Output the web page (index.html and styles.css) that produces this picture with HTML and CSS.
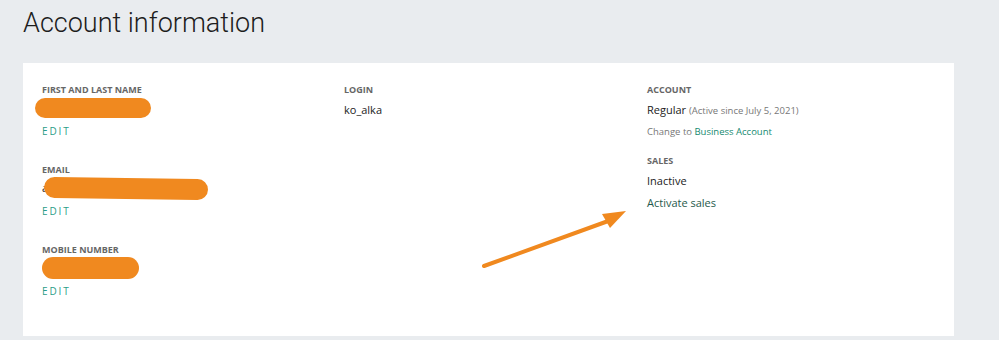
FILE: index.html
```html
<!DOCTYPE html>
<html lang="en">
<head>
    <meta charset="UTF-8">
    <meta name="viewport" content="width=device-width, initial-scale=1.0">
    <title>Account information</title>
    <link rel="stylesheet" href="styles.css">
</head>
<body>
    <h1>Account information</h1>

    <div class="card">
        <!-- Left column: personal data -->
        <div class="column">
            <div class="field">
                <div class="label">First and last name</div>
                <div class="hidden-value"><span class="blur blur-name"></span></div>
                <a class="edit" href="#">Edit</a>
            </div>
            <div class="field">
                <div class="label">Email</div>
                <div class="hidden-value">a<span class="blur blur-email"></span></div>
                <a class="edit" href="#">Edit</a>
            </div>
            <div class="field">
                <div class="label">Mobile number</div>
                <div class="hidden-value"><span class="blur blur-phone"></span></div>
                <a class="edit" href="#">Edit</a>
            </div>
        </div>

        <!-- Middle column -->
        <div class="column">
            <div class="label">Login</div>
            <div class="value">ko_alka</div>
        </div>

        <!-- Right column: account and sales -->
        <div class="column">
            <div class="label">Account</div>
            <div class="value">Regular <span class="muted">(Active since July 5, 2021)</span></div>
            <div class="change">Change to <a href="#">Business Account</a></div>

            <div class="label sales-label">Sales</div>
            <div class="value">Inactive</div>
            <a class="activate" href="#">Activate sales</a>
        </div>

        <svg class="arrow" width="160" height="70" viewBox="0 0 160 70">
            <line x1="3" y1="55" x2="130" y2="9" stroke="#f0891f" stroke-width="4" stroke-linecap="round"/>
            <polygon points="121,3 145,0 129,17" fill="#f0891f"/>
        </svg>
    </div>
</body>
</html>
```

FILE: styles.css
```css
body {
    font-family: "Open Sans", Arial, sans-serif;
    background-color: #e9ecef;
    margin: 0;
    padding: 0;
    color: #222;
}

h1 {
    font-family: Roboto, Arial, sans-serif;
    font-weight: 300;
    font-size: 27px;
    line-height: 32px;
    color: #1d1d1d;
    margin: 0;
    padding: 7px 0 0 23px;
    height: 56px;
}

.card {
    position: relative;
    margin-left: 23px;
    width: 931px;
    height: 273px;
    box-sizing: border-box;
    background-color: #fff;
    padding: 20px 19px 0;
    display: grid;
    grid-template-columns: 302px 303px 1fr;
}

.label {
    font-size: 9px;
    font-weight: 700;
    text-transform: uppercase;
    color: #666;
    line-height: 14px;
}

.value {
    font-size: 11px;
    line-height: 18px;
    margin-top: 4px;
    color: #222;
}

.field {
    height: 80px;
}

.hidden-value {
    font-size: 11px;
    height: 20px;
    line-height: 20px;
    margin-top: 1px;
}

.blur {
    display: inline-block;
    background-color: #f0891f;
    border-radius: 11px;
    vertical-align: top;
}

.blur-name {
    width: 116px;
    height: 20px;
    margin-left: -7px;
}

.blur-email {
    width: 164px;
    height: 21px;
    margin-left: -4px;
    transform: rotate(0.8deg);
}

.blur-phone {
    width: 97px;
    height: 22px;
    margin-top: -1px;
}

.edit {
    display: inline-block;
    margin-top: 6px;
    font-size: 10px;
    line-height: 14px;
    letter-spacing: 1.9px;
    text-transform: uppercase;
    color: #2a9d88;
    text-decoration: none;
}

.muted {
    font-size: 9.5px;
    color: #777;
}

.change {
    font-size: 9.5px;
    line-height: 14px;
    color: #777;
    margin-top: 5px;
}

.change a {
    color: #14896f;
    text-decoration: none;
}

.sales-label {
    margin-top: 15px;
}

.activate {
    display: block;
    margin-top: 4px;
    font-size: 11px;
    line-height: 18px;
    color: #1f5a4c;
    text-decoration: none;
}

.arrow {
    position: absolute;
    left: 458px;
    top: 148px;
}
```
